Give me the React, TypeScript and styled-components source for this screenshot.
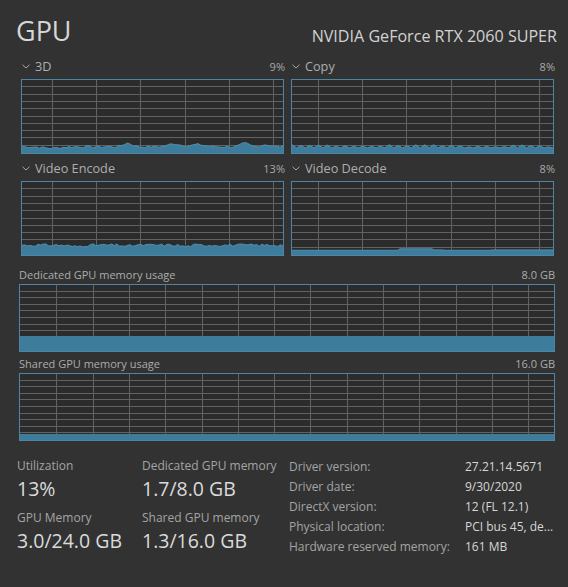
import React from "react";
import styled, { createGlobalStyle } from "styled-components";

const GlobalStyle = createGlobalStyle`
  html, body {
    margin: 0;
    padding: 0;
    background: #323232;
  }
  body {
    font-family: "Open Sans", "Noto Sans", sans-serif;
    color: #d4d4d4;
  }
`;

const Page = styled.div`
  width: 568px;
  height: 587px;
  background: #323232;
  overflow: hidden;
  box-sizing: border-box;
`;

const Header = styled.header`
  height: 52px;
  display: flex;
  justify-content: space-between;
  align-items: flex-start;
  padding: 0 11px 0 16px;
`;

const Title = styled.h1`
  margin: 14px 0 0;
  font-size: 27px;
  font-weight: 400;
  line-height: 34px;
  color: #d6d6d6;
`;

const Device = styled.div`
  margin-top: 25px;
  font-size: 16.1px;
  line-height: 22px;
  color: #d2d2d2;
`;

const SmallGrid = styled.section`
  display: grid;
  grid-template-columns: 263px 263px;
  column-gap: 7px;
  padding-left: 21px;
`;

const Cell = styled.div`
  display: flex;
  flex-direction: column;
`;

const LabelRow = styled.div<{ $pad: number }>`
  display: flex;
  align-items: center;
  justify-content: space-between;
  height: 18px;
  padding-top: ${(p) => p.$pad}px;
  margin-bottom: 4px;
  font-size: 12px;
  color: #aeaeae;
  margin-right: -1px;
`;

const LabelLeft = styled.span`
  display: flex;
  align-items: center;
  gap: 5px;
  padding-left: 1px;
  font-size: 12.7px;
`;

const Percent = styled.span`
  font-size: 11px;
  color: #a8a8a8;
`;

const BigSection = styled.section`
  padding: 0 13px 0 19px;
`;

const BigLabel = styled.div<{ $pad: number }>`
  display: flex;
  justify-content: space-between;
  align-items: center;
  height: 18px;
  padding-top: ${(p) => p.$pad}px;
  margin-bottom: 1px;
  font-size: 11px;
  color: #acacac;
`;

const Stats = styled.section`
  display: grid;
  grid-template-columns: 125px 147px 1fr;
  padding-left: 17px;
  margin-top: 17px;
`;

const StatCol = styled.div`
  display: flex;
  flex-direction: column;
`;

const StatGroup = styled.div`
  display: flex;
  flex-direction: column;
  & + & {
    margin-top: 6px;
  }
`;

const StatLabel = styled.div`
  font-size: 12px;
  line-height: 16px;
  color: #a4a4a4;
  white-space: nowrap;
`;

const StatValue = styled.div`
  font-size: 19.5px;
  line-height: 30px;
  color: #dadada;
  white-space: nowrap;
`;

const InfoTable = styled.div`
  display: grid;
  grid-template-columns: 176px 1fr;
  grid-auto-rows: 20px;
  margin-top: -2px;
  font-size: 12px;
  align-items: center;
  white-space: nowrap;
`;

const InfoKey = styled.span`
  color: #a4a4a4;
`;

const InfoVal = styled.span`
  color: #d6d6d6;
`;

const GraphBox = styled.div<{ $w: number; $h: number }>`
  width: ${(p) => p.$w}px;
  height: ${(p) => p.$h}px;
  line-height: 0;
`;

const Chevron = () => (
  <svg width="8" height="5" viewBox="0 0 8 5">
    <path d="M0.5 0.8 L4 4 L7.5 0.8" fill="none" stroke="#a8a8a8" strokeWidth="1" />
  </svg>
);

function seeded(seed: number) {
  let s = seed;
  return () => {
    s = (s * 9301 + 49297) % 233280;
    return s / 233280;
  };
}

function series(n: number, base: number, jitter: number, seed: number, bumps: [number, number, number][] = []) {
  const r = seeded(seed);
  const out: number[] = [];
  for (let i = 0; i < n; i++) {
    let v = base + (r() - 0.5) * jitter;
    for (const [c, h, w] of bumps) {
      const d = (i - c) / w;
      v += h * Math.exp(-d * d);
    }
    out.push(Math.max(0, v));
  }
  return out;
}

type GraphProps = {
  w: number;
  h: number;
  colStep: number;
  colOffset: number;
  rows: number;
  data?: number[];
  level?: number;
};

const Graph: React.FC<GraphProps> = ({ w, h, colStep, colOffset, rows, data, level }) => {
  const iw = w - 2;
  const ih = h - 2;
  const vlines: number[] = [];
  for (let x = colOffset; x < iw; x += colStep) if (x > 0.5) vlines.push(Math.round(x) + 0.5);
  const hlines: number[] = [];
  for (let i = 1; i < rows; i++) hlines.push(Math.round((ih * i) / rows) + 0.5);

  let fill: React.ReactNode = null;
  if (data) {
    const n = data.length;
    const pts = data.map((v, i) => `${1 + (iw * i) / (n - 1)},${1 + ih - v * ih}`);
    fill = (
      <>
        <polygon points={`1,${h - 1} ${pts.join(" ")} ${w - 1},${h - 1}`} fill="#3e7c9c" />
        <polyline points={pts.join(" ")} fill="none" stroke="#4f90b2" strokeWidth="1" />
      </>
    );
  } else if (level !== undefined) {
    const fh = Math.round(level * ih);
    fill = <rect x="1" y={h - 1 - fh} width={iw} height={fh} fill="#3e7c9c" />;
  }

  return (
    <GraphBox $w={w} $h={h}>
      <svg width={w} height={h} viewBox={`0 0 ${w} ${h}`} shapeRendering="crispEdges">
        <rect x="0" y="0" width={w} height={h} fill="#2b2b2b" />
        {hlines.map((y) => (
          <line key={"h" + y} x1="1" x2={w - 1} y1={y} y2={y} stroke="#626262" strokeWidth="1" />
        ))}
        {vlines.map((x) => (
          <line key={"v" + x} x1={x + 1} x2={x + 1} y1="1" y2={h - 1} stroke="#626262" strokeWidth="1" />
        ))}
        <g shapeRendering="auto">{fill}</g>
        <rect x="0.5" y="0.5" width={w - 1} height={h - 1} fill="none" stroke="#4e84a4" strokeWidth="1" />
      </svg>
    </GraphBox>
  );
};

const d3 = series(90, 0.085, 0.03, 7, [
  [36, 0.05, 2],
  [52, 0.04, 3],
  [60, 0.03, 3],
  [76, 0.045, 2],
  [83, 0.03, 2],
  [10, -0.02, 4],
]);
const copy = (() => {
  const r = seeded(19);
  const out: number[] = [];
  for (let i = 0; i < 60; i++) out.push(0.07 + (i % 2 === 0 ? 0.03 * r() + 0.015 : 0));
  return out;
})();
const encode = series(100, 0.135, 0.035, 31, [
  [20, -0.02, 3],
  [62, -0.02, 2],
  [40, -0.015, 2],
]);
const decode = (() => {
  const out: number[] = [];
  for (let i = 0; i < 100; i++) {
    let v = 0.065;
    if (i > 40 && i < 54) v = 0.085;
    if (i >= 54 && i < 58) v = 0.07;
    if (i > 75) v = 0.07;
    out.push(v);
  }
  return out;
})();

const small = [
  { name: "3D", pct: "9%", data: d3, off: 31 },
  { name: "Copy", pct: "8%", data: copy, off: 27 },
  { name: "Video Encode", pct: "13%", data: encode, off: 31 },
  { name: "Video Decode", pct: "8%", data: decode, off: 27 },
];

const info: [string, string][] = [
  ["Driver version:", "27.21.14.5671"],
  ["Driver date:", "9/30/2020"],
  ["DirectX version:", "12 (FL 12.1)"],
  ["Physical location:", "PCI bus 45, de..."],
  ["Hardware reserved memory:", "161 MB"],
];

export default function App() {
  return (
    <Page>
      <GlobalStyle />
      <Header>
        <Title>GPU</Title>
        <Device>NVIDIA GeForce RTX 2060 SUPER</Device>
      </Header>

      <SmallGrid>
        {small.map((g) => (
          <Cell key={g.name}>
            <LabelRow $pad={5}>
              <LabelLeft>
                <Chevron />
                {g.name}
              </LabelLeft>
              <Percent>{g.pct}</Percent>
            </LabelRow>
            <Graph w={263} h={75} colStep={44.2} colOffset={g.off - 1} rows={10} data={g.data} />
          </Cell>
        ))}
      </SmallGrid>

      <BigSection>
        <BigLabel $pad={9}>
          <span>Dedicated GPU memory usage</span>
          <span>8.0 GB</span>
        </BigLabel>
        <Graph w={536} h={68} colStep={36.3} colOffset={0} rows={10} level={0.23} />
        <BigLabel $pad={2}>
          <span>Shared GPU memory usage</span>
          <span>16.0 GB</span>
        </BigLabel>
        <Graph w={536} h={68} colStep={36.3} colOffset={0} rows={10} level={0.09} />
      </BigSection>

      <Stats>
        <StatCol>
          <StatGroup>
            <StatLabel>Utilization</StatLabel>
            <StatValue>13%</StatValue>
          </StatGroup>
          <StatGroup>
            <StatLabel>GPU Memory</StatLabel>
            <StatValue>3.0/24.0 GB</StatValue>
          </StatGroup>
        </StatCol>
        <StatCol>
          <StatGroup>
            <StatLabel>Dedicated GPU memory</StatLabel>
            <StatValue>1.7/8.0 GB</StatValue>
          </StatGroup>
          <StatGroup>
            <StatLabel>Shared GPU memory</StatLabel>
            <StatValue>1.3/16.0 GB</StatValue>
          </StatGroup>
        </StatCol>
        <InfoTable>
          {info.map(([k, v]) => (
            <React.Fragment key={k}>
              <InfoKey>{k}</InfoKey>
              <InfoVal>{v}</InfoVal>
            </React.Fragment>
          ))}
        </InfoTable>
      </Stats>
    </Page>
  );
}
